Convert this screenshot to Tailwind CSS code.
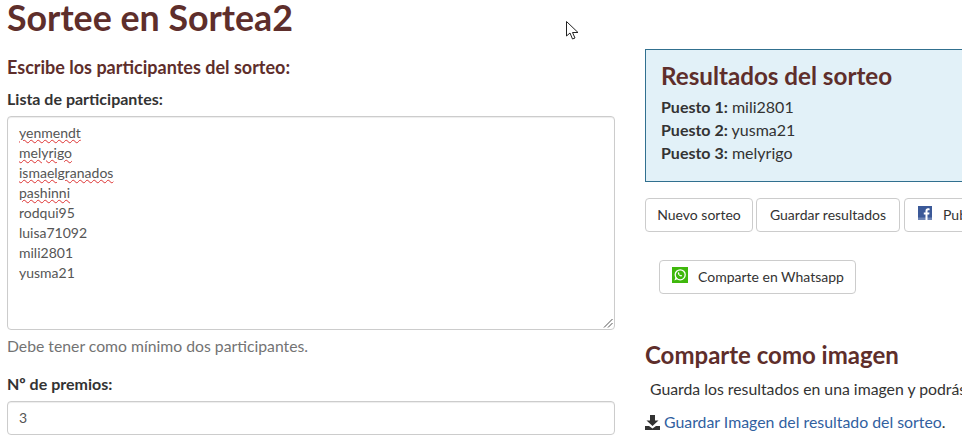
<!DOCTYPE html>
<html lang="es">
<head>
    <meta charset="UTF-8">
    <meta name="viewport" content="width=device-width, initial-scale=1.0">
    <title>Sortea2</title>
    <script src="https://cdn.jsdelivr.net/npm/@tailwindcss/browser@4"></script>
</head>
<body class="bg-white text-[#333] font-['Lato','Noto_Sans',sans-serif] text-[16px] leading-[20px]">
    <div class="relative flex h-[443px] w-[962px] overflow-hidden">
        <!-- Left column -->
        <main class="ml-[7px] w-[608px] shrink-0">
            <h1 class="text-[35.75px] leading-[36px] font-bold text-[#5e2e2b]">Sortee en Sortea2</h1>
            <h2 class="mt-[21px] text-[18px] leading-[20px] font-bold text-[#5e2e2b]">Escribe los participantes del sorteo:</h2>
            <label class="mt-[12px] block font-bold">Lista de participantes:</label>
            <!-- Textarea look-alike, the wavy spellcheck lines need real spans -->
            <div class="relative mt-[7px] h-[214px] rounded-[4px] border border-[#ccc] py-[6px] pr-3 pl-[11px] text-[14px] text-[#555] shadow-[inset_0_1px_1px_rgba(0,0,0,0.075)]">
                <div><span class="underline decoration-wavy decoration-[#d33] decoration-1">yenmendt</span></div>
                <div><span class="underline decoration-wavy decoration-[#d33] decoration-1">melyrigo</span></div>
                <div><span class="underline decoration-wavy decoration-[#d33] decoration-1">ismaelgranados</span></div>
                <div><span class="underline decoration-wavy decoration-[#d33] decoration-1">pashinni</span></div>
                <div>rodqui95</div>
                <div>luisa71092</div>
                <div>mili2801</div>
                <div>yusma21</div>
                <svg class="absolute right-[1px] bottom-[1px]" width="10" height="10" viewBox="0 0 10 10" fill="none" stroke="#555" stroke-width="1"><path d="M9.5 1 1 9.5M9.5 5 5 9.5"/></svg>
            </div>
            <p class="mt-[6px] text-[15.75px] text-[#737373]">Debe tener como mínimo dos participantes.</p>
            <label class="mt-[18px] block font-bold">Nº de premios:</label>
            <div class="mt-[7px] flex h-[34px] items-center rounded-[4px] border border-[#ccc] pr-3 pl-[11px] text-[14px] text-[#555] shadow-[inset_0_1px_1px_rgba(0,0,0,0.075)]">3</div>
        </main>

        <!-- Right column -->
        <aside class="ml-[30px] w-[500px] shrink-0">
            <section class="mt-[49px] h-[133px] border border-[#31708f] bg-[#e2f1f8] pl-[15px] pt-[11px]">
                <h2 class="text-[24.2px] leading-[30px] font-bold text-[#5e2e2b]">Resultados del sorteo</h2>
                <p class="mt-[4px] leading-[23px]"><b>Puesto 1:</b> mili2801</p>
                <p class="leading-[23px]"><b>Puesto 2:</b> yusma21</p>
                <p class="leading-[23px]"><b>Puesto 3:</b> melyrigo</p>
            </section>

            <div class="mt-4 flex gap-[3px] text-[14px]">
                <button class="h-[34px] w-[108px] rounded-[4px] border border-[#ccc] bg-white">Nuevo sorteo</button>
                <button class="h-[34px] w-[144px] rounded-[4px] border border-[#ccc] bg-white">Guardar resultados</button>
                <button class="ml-[1px] flex h-[34px] items-start gap-[11px] rounded-[4px] border border-[#ccc] bg-white pl-[13px] whitespace-nowrap">
                    <svg class="mt-[7px]" width="14" height="14" viewBox="0 0 14 14"><rect width="14" height="14" fill="#3b5998"/><rect y="11.5" width="14" height="2.5" fill="#6d84b4"/><path d="M9.5 14V8.4h1.7l.3-2H9.500V5.200c0-.6.2-1 1-1h1.100V2.400c-.3 0-.9-.1-1.600-.1-1.500 0-2.500.9-2.500 2.600v1.500H5.800v2h1.700V14z" fill="#fff"/></svg>
                    <span class="mt-[6px]">Publicar en Facebook</span>
                </button>
            </div>

            <button class="mt-[28px] ml-[14px] flex h-[34px] w-[197px] items-start gap-[10px] rounded-[4px] border border-[#ccc] bg-white pl-[12px] text-[14px] whitespace-nowrap">
                <svg class="mt-[6px]" width="16" height="16" viewBox="0 0 16 16"><rect width="16" height="16" fill="#3fb80c"/><circle cx="8.200" cy="7.800" r="5" fill="none" stroke="#fff" stroke-width="1.300"/><path d="M2.500 13.500 3.600 10l2 2z" fill="#fff"/><path d="M6.300 5.300c-.7.600-.5 1.700.4 2.800.9 1.100 2.100 1.700 2.900 1.200l.5-.7-1.200-.8-.5.400c-.5-.2-1-.7-1.300-1.300l.4-.5-.7-1.200z" fill="#fff"/></svg>
                <span class="mt-[6px]">Comparte en Whatsapp</span>
            </button>

            <h2 class="mt-[48px] text-[24px] leading-[26px] font-bold text-[#5e2e2b]">Comparte como imagen</h2>
            <p class="mt-[11px] ml-[5px] text-[15.8px] whitespace-nowrap">Guarda los resultados en una imagen y podrás compartirla</p>
            <p class="mt-[13px] flex items-center gap-[4px] whitespace-nowrap">
                <svg width="15" height="15" viewBox="0 0 15 15" fill="#333"><path d="M5 0h5v5.500h3.500L7.500 11 1.500 5.500H5z"/><path d="M0 11h4l3.500 2.500L11 11h4v4H0z"/></svg>
                <span class="text-[15.85px]"><a class="text-[#31609f]">Guardar Imagen del resultado del sorteo</a>.</span>
            </p>
        </aside>

        <!-- Mouse pointer caught in the capture -->
        <svg class="absolute top-[21px] left-[566px]" width="14" height="20" viewBox="0 0 14 20" fill="#fff" stroke="#222" stroke-width="1"><path d="M.5.500V15l3.500-3 2.500 6 2.500-1-2.500-5.500H12z"/></svg>
    </div>
</body>
</html>
